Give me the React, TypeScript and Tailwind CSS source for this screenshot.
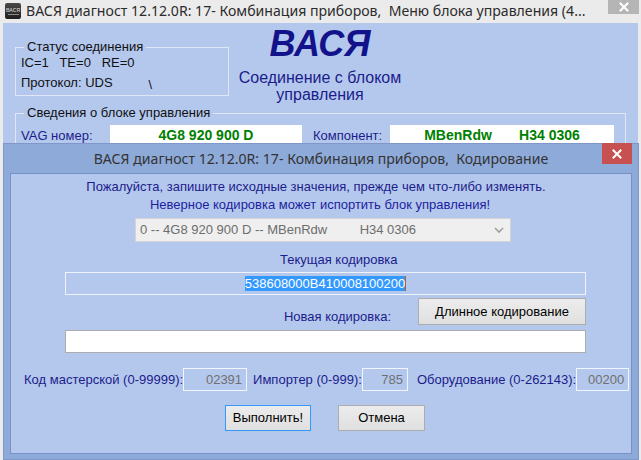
import React from "react";

const navy = "text-[#1c1c8a]";

function CloseGlyph() {
  return (
    <svg width="10" height="10" viewBox="0 0 10 10">
      <path d="M1.5 1.5 L8.5 8.5 M8.5 1.5 L1.5 8.5" stroke="#fff" strokeWidth="2" strokeLinecap="square" />
    </svg>
  );
}

function AppIcon() {
  return (
    <div className="flex h-[16px] w-[16px] flex-col items-center justify-center rounded-[2px] bg-gradient-to-b from-[#4a4a4a] to-[#1e1e1e]">
      <span className="text-[5px] font-bold leading-[5px] text-[#bdbdbd]">ВАСЯ</span>
      <span className="mt-[1px] h-[1px] w-[11px] bg-[#8a8a8a]" />
    </div>
  );
}

function ReadOnlyNum({ value, w }: { value: string; w: string }) {
  return (
    <div className={`flex h-[23px] ${w} items-center justify-end border border-[#f2f5fb] bg-[#b4c8ee] pr-[4px] text-[13px] text-[#707070]`}>
      {value}
    </div>
  );
}

export default function App() {
  return (
    <div className="relative h-[460px] w-[641px] overflow-hidden bg-[#ebebeb] font-['Liberation_Sans',Arial,sans-serif]">
      {/* main window title */}
      <div className="flex h-[23px] items-start">
        <div className="ml-[5px] mt-[3px]">
          <AppIcon />
        </div>
        <div className="ml-[5px] mt-[1px] flex-1 whitespace-nowrap font-['Noto_Sans',sans-serif] text-[14.1px] leading-[20px] text-[#2b2b2b]">
          ВАСЯ диагност 12.12.0R: 17- Комбинация приборов,&nbsp; Меню блока управления (4...
        </div>
        <div className="mr-[2px] flex h-[14px] w-[31px] shrink-0 items-center justify-center bg-[#b5b5b5]">
          <CloseGlyph />
        </div>
      </div>

      {/* main window body */}
      <div className="mx-[3px] h-[437px] bg-[#b4c8ee]">
        <div className="flex">
          <fieldset className="ml-[12px] mt-[17px] h-[56px] w-[214px] border border-[#dfe6f5] pl-[5px]">
            <legend className="ml-[3px] px-[3px] text-[13px] leading-[14px] text-[#111]">Статус соединения</legend>
            <div className="mt-[2px] text-[13px] leading-[14px] text-[#111]">IC=1&nbsp;&nbsp; TE=0&nbsp;&nbsp; RE=0</div>
            <div className="mt-[6px] flex text-[13px] leading-[14px] text-[#111]">
              <span>Протокол: UDS</span>
              <span className="ml-[36px] mt-[2px]">\</span>
            </div>
          </fieldset>
          <div className="flex w-[182px] flex-col items-center pt-[1px]">
            <div className="text-[36px] font-bold italic leading-[40px] text-[#12128a]">ВАСЯ</div>
            <div className="mt-[5px] text-center text-[16px] leading-[17px] text-[#1c1c8a]">
              Соединение с блоком
              <br />
              управления
            </div>
          </div>
        </div>

        <fieldset className="ml-[12px] mt-[3px] h-[60px] w-[611px] border border-[#dfe6f5] pl-[5px]">
          <legend className="ml-[3px] px-[3px] text-[13px] leading-[14px] text-[#111]">Сведения о блоке управления</legend>
          <div className="mt-[5px] flex items-start">
            <span className={`mt-[4px] w-[89px] text-[13px] leading-[14px] ${navy}`}>VAG номер:</span>
            <div className="flex h-[21px] w-[192px] items-center justify-center bg-white text-[14px] font-bold text-[#008000]">
              4G8 920 900 D
            </div>
            <span className={`ml-[11px] mt-[4px] w-[77px] text-[13px] leading-[14px] ${navy}`}>Компонент:</span>
            <div className="flex h-[21px] w-[224px] items-center justify-center bg-white text-[14px] font-bold text-[#008000]">
              MBenRdw&nbsp;&nbsp;&nbsp;&nbsp;&nbsp;&nbsp; H34 0306
            </div>
          </div>
        </fieldset>
      </div>

      {/* coding dialog */}
      <div className="absolute left-[3px] top-[143px] flex h-[317px] w-[636px] flex-col border border-[#7f98c9] bg-[#8eaad9]">
        <div className="relative flex h-[29px] items-center justify-center">
          <span className="font-['Noto_Sans',sans-serif] text-[14.1px] leading-[20px] text-[#333]">
            ВАСЯ диагност 12.12.0R: 17- Комбинация приборов,&nbsp; Кодирование
          </span>
          <div className="absolute right-[6px] top-[-1px] flex h-[21px] w-[30px] items-center justify-center bg-[#c75050]">
            <CloseGlyph />
          </div>
        </div>

        <div className="mx-[6px] h-[281px] border border-[#7792c8] bg-[#b4c8ee]">
          <div className="mt-[4px] text-center text-[13px] leading-[18px]">
            <div className="pr-[10px] text-[#1c1c8a]">
              Пожалуйста, запишите исходные значения, прежде чем что-либо изменять.
            </div>
            <div className="pr-[2px] text-[#1e1e9e]">Неверное кодировка может испортить блок управления!</div>
          </div>

          <div className="ml-[124px] mt-[4px] flex h-[24px] w-[376px] items-center justify-between border border-[#d4d4d4] bg-[#efefef] pl-[4px] pr-[6px] text-[13px] text-[#6d6d6d]">
            <span>0 -- 4G8 920 900 D -- MBenRdw&nbsp;&nbsp;&nbsp;&nbsp;&nbsp;&nbsp;&nbsp;&nbsp; H34 0306</span>
            <svg width="10" height="7" viewBox="0 0 10 7">
              <path d="M1 1 L5 5 L9 1" fill="none" stroke="#a0a0a0" strokeWidth="1.6" />
            </svg>
          </div>

          <div className={`ml-[269px] mt-[10px] text-[13px] leading-[16px] ${navy}`}>Текущая кодировка</div>

          <div className="ml-[54px] mt-[4px] flex h-[23px] w-[521px] items-center justify-center border border-[#eef2fa] bg-[#b4c8ee] text-[13px]">
            <span className="bg-[#3399ff] leading-[15px] text-white">538608000B410008100200</span>
            <span className="h-[15px] w-[1px] bg-[#c06010]" />
          </div>

          <div className="mt-[3px] flex items-end">
            <div className={`w-[380px] pb-[1px] text-right text-[13px] leading-[15px] ${navy}`}>Новая кодировка:</div>
            <button className="ml-[27px] h-[27px] w-[168px] border border-[#adadad] bg-gradient-to-b from-[#ececec] to-[#e0e0e0] text-[13px] text-black">
              Длинное кодирование
            </button>
          </div>

          <div className="ml-[54px] mt-[5px] h-[23px] w-[521px] border border-[#acacac] bg-white" />

          <div className="ml-[13px] mt-[15px] flex items-center text-[13px]">
            <span className={navy}>Код мастерской (0-99999):</span>
            <ReadOnlyNum value="02391" w="w-[64px]" />
            <span className={`ml-[6px] ${navy}`}>Импортер (0-999):</span>
            <ReadOnlyNum value="785" w="w-[46px]" />
            <span className={`ml-[9px] ${navy}`}>Оборудование (0-262143):</span>
            <ReadOnlyNum value="00200" w="w-[53px]" />
          </div>

          <div className="ml-[214px] mt-[14px] flex gap-[27px]">
            <button className="h-[26px] w-[86px] border border-[#3399ff] bg-gradient-to-b from-[#ececec] to-[#e0e0e0] text-[13px] text-black">
              Выполнить!
            </button>
            <button className="h-[26px] w-[87px] border border-[#adadad] bg-gradient-to-b from-[#ececec] to-[#e0e0e0] text-[13px] text-black">
              Отмена
            </button>
          </div>
        </div>
      </div>
    </div>
  );
}
